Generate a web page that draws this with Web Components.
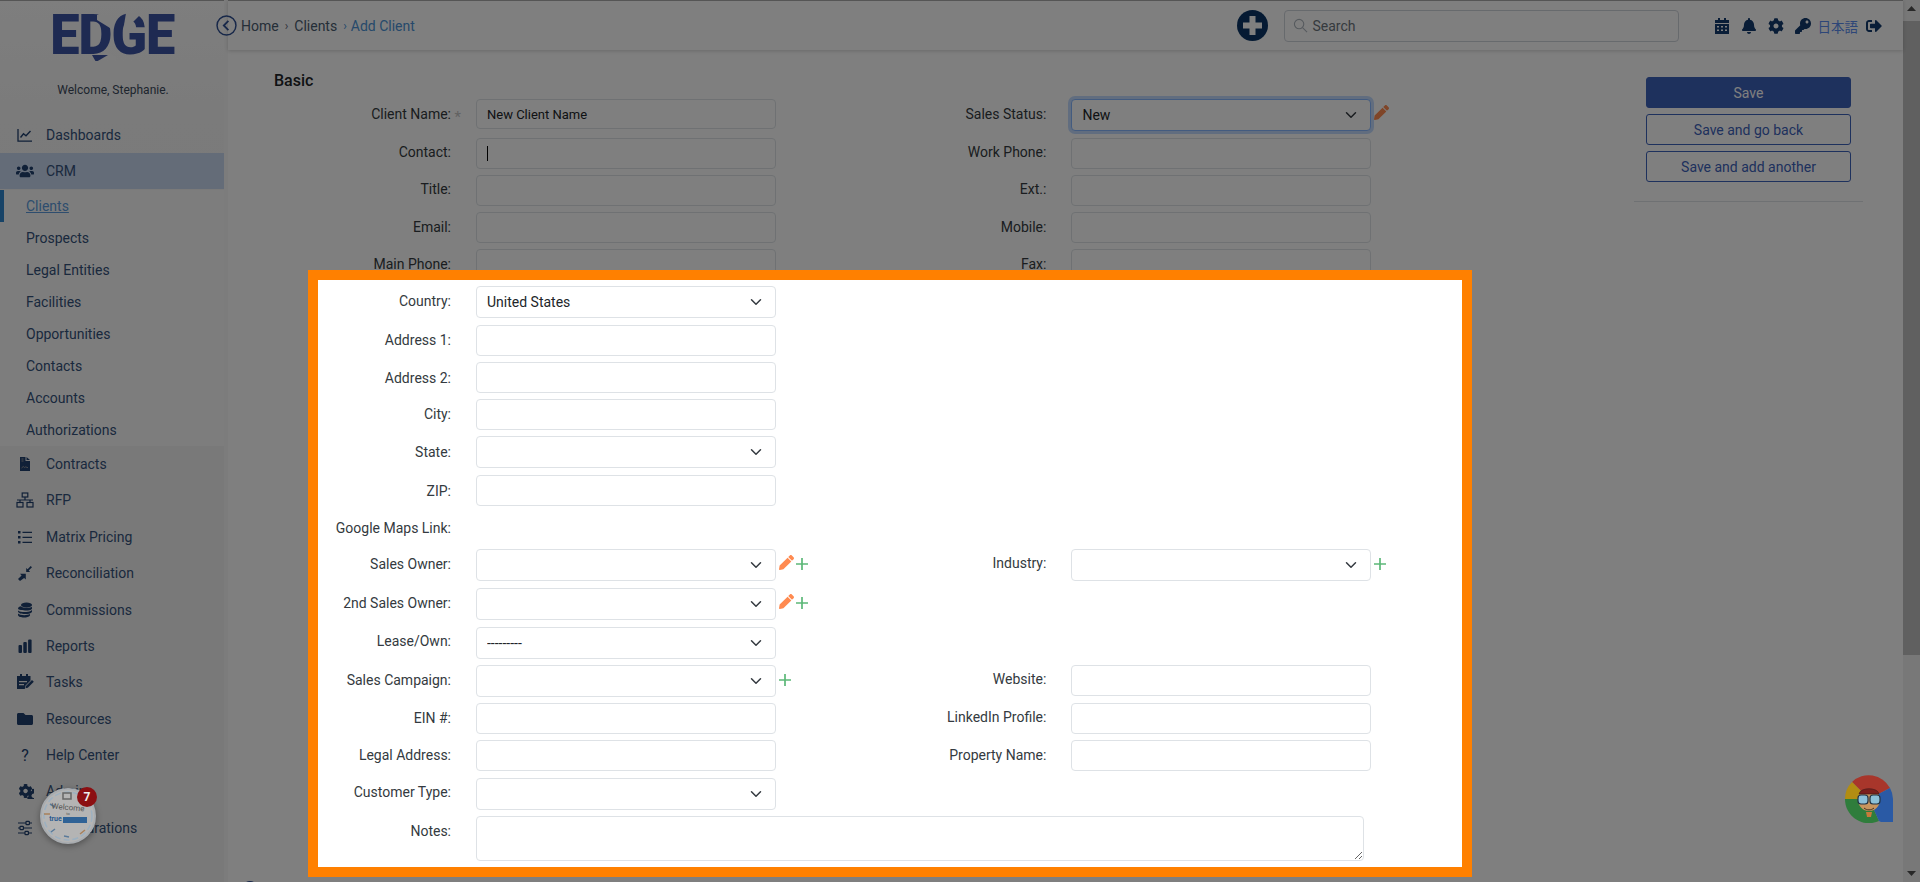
<!DOCTYPE html>
<html lang="en">
<head>
<meta charset="utf-8">
<title>Add Client</title>
<style>
  html, body { margin: 0; height: 882px; overflow: hidden; background: #fff; }
  body { font-family: Roboto, "Liberation Sans", sans-serif; font-size: 14px; color: #343a40; }
</style>
</head>
<body>
<edge-app>
  <edge-sidebar slot="sidebar">
    <nav-item icon="chart">Dashboards</nav-item>
    <nav-item icon="users" active>CRM</nav-item>
    <nav-sub current>Clients</nav-sub>
    <nav-sub>Prospects</nav-sub>
    <nav-sub>Legal Entities</nav-sub>
    <nav-sub>Facilities</nav-sub>
    <nav-sub>Opportunities</nav-sub>
    <nav-sub>Contacts</nav-sub>
    <nav-sub>Accounts</nav-sub>
    <nav-sub>Authorizations</nav-sub>
    <nav-item icon="file">Contracts</nav-item>
    <nav-item icon="sitemap">RFP</nav-item>
    <nav-item icon="list">Matrix Pricing</nav-item>
    <nav-item icon="compress">Reconciliation</nav-item>
    <nav-item icon="coins">Commissions</nav-item>
    <nav-item icon="bars">Reports</nav-item>
    <nav-item icon="tasks">Tasks</nav-item>
    <nav-item icon="folder">Resources</nav-item>
    <nav-item icon="help">Help Center</nav-item>
    <nav-item icon="cogs">Admin</nav-item>
    <nav-item icon="sliders">Configurations</nav-item>
  </edge-sidebar>
  <edge-topbar slot="topbar"></edge-topbar>
  <client-form slot="main">
    <form-field label="Client Name:" required value="New Client Name" h="33" ctl="30" drop="1"></form-field>
    <form-field label="Sales Status:" kind="select" value="New" focused pencil drop="1"></form-field>
    <form-field label="Contact:" caret></form-field>
    <form-field label="Work Phone:"></form-field>
    <form-field label="Title:"></form-field>
    <form-field label="Ext.:"></form-field>
    <form-field label="Email:" drop="1"></form-field>
    <form-field label="Mobile:" drop="1"></form-field>
    <form-field label="Main Phone:" drop="1"></form-field>
    <form-field label="Fax:" drop="1"></form-field>
    <form-field label="Country:" kind="select" value="United States" h="33" drop="1"></form-field>
    <form-field kind="blank"></form-field>
    <form-field label="Address 1:" drop="1"></form-field>
    <form-field kind="blank"></form-field>
    <form-field label="Address 2:" drop="2"></form-field>
    <form-field kind="blank"></form-field>
    <form-field label="City:" drop="1"></form-field>
    <form-field kind="blank"></form-field>
    <form-field label="State:" kind="select" h="33" drop="2"></form-field>
    <form-field kind="blank"></form-field>
    <form-field label="ZIP:" drop="2"></form-field>
    <form-field kind="blank"></form-field>
    <form-field label="Google Maps Link:" kind="none" drop="2"></form-field>
    <form-field kind="blank"></form-field>
    <form-field label="Sales Owner:" kind="select" pencil plus h="32" drop="1"></form-field>
    <form-field label="Industry:" kind="select" plus></form-field>
    <form-field label="2nd Sales Owner:" kind="select" pencil plus h="33" drop="1"></form-field>
    <form-field kind="blank"></form-field>
    <form-field label="Lease/Own:" kind="select" value="---------" h="32"></form-field>
    <form-field kind="blank"></form-field>
    <form-field label="Sales Campaign:" kind="select" plus h="32" drop="1"></form-field>
    <form-field label="Website:"></form-field>
    <form-field label="EIN #:" drop="1"></form-field>
    <form-field label="LinkedIn Profile:"></form-field>
    <form-field label="Legal Address:" h="32" drop="1"></form-field>
    <form-field label="Property Name:" drop="1"></form-field>
    <form-field label="Customer Type:" kind="select" h="32"></form-field>
    <form-field kind="blank"></form-field>
    <form-field label="Notes:" kind="textarea" wide drop="1"></form-field>
  </client-form>
  <save-panel slot="aside"></save-panel>
  <fake-scrollbar slot="scroll"></fake-scrollbar>
</edge-app>
<tour-spot></tour-spot>
<welcome-badge count="7"></welcome-badge>
<chat-avatar></chat-avatar>

<script>
const GEAR = "M487.400 315.700l-42.600-24.600c4.300-23.200 4.300-47 0-70.200l42.600-24.600c4.900-2.800 7.100-8.600 5.500-14-11.100-35.600-30-67.800-54.700-94.600-3.800-4.100-10-5.100-14.800-2.300L380.800 110c-17.900-15.400-38.500-27.300-60.800-35.100V25.800c0-5.600-3.900-10.500-9.400-11.700-36.700-8.200-74.300-7.800-109.200 0-5.500 1.200-9.400 6.100-9.400 11.700V75c-22.200 7.900-42.800 19.800-60.800 35.100L88.700 85.500c-4.900-2.800-11-1.900-14.800 2.300-24.700 26.700-43.600 58.900-54.700 94.600-1.700 5.400.6 11.200 5.500 14L67.300 221c-4.300 23.200-4.300 47 0 70.200l-42.600 24.600c-4.900 2.800-7.100 8.600-5.500 14 11.100 35.600 30 67.800 54.700 94.600 3.800 4.100 10 5.100 14.800 2.300l42.600-24.600c17.900 15.400 38.500 27.300 60.800 35.100v49.200c0 5.600 3.900 10.500 9.400 11.700 36.700 8.200 74.300 7.800 109.200 0 5.500-1.200 9.400-6.100 9.400-11.700v-49.200c22.200-7.900 42.800-19.800 60.800-35.100l42.600 24.600c4.900 2.800 11 1.900 14.800-2.300 24.700-26.700 43.600-58.900 54.700-94.600 1.500-5.500-.7-11.300-5.600-14.100zM256 336c-44.100 0-80-35.900-80-80s35.900-80 80-80 80 35.900 80 80-35.900 80-80 80z";

const ICONS = {
  chart: '<svg viewBox="0 0 16 16" fill="none" stroke="currentColor"><path stroke-width="1.3" d="M1 2v12.2h14"/><path stroke-width="1.4" d="M3.5 10.5l3-3.7 2.5 2 4.500-4.800"/></svg>',
  users: '<svg viewBox="0 0 640 512" fill="currentColor"><path d="M96 224c35.300 0 64-28.700 64-64s-28.700-64-64-64-64 28.700-64 64 28.700 64 64 64zm448 0c35.300 0 64-28.700 64-64s-28.700-64-64-64-64 28.700-64 64 28.700 64 64 64zm32 32h-64c-17.600 0-33.500 7.100-45.100 18.600 40.300 22.100 68.900 62 75.100 109.400h66c17.700 0 32-14.300 32-32v-32c0-35.300-28.700-64-64-64zm-256 0c61.900 0 112-50.100 112-112S381.900 32 320 32 208 82.100 208 144s50.100 112 112 112zm76.800 32h-8.300c-20.800 10-43.900 16-68.500 16s-47.600-6-68.500-16h-8.300C179.600 288 128 339.600 128 403.200V432c0 26.500 21.500 48 48 48h288c26.500 0 48-21.500 48-48v-28.800c0-63.600-51.600-115.200-115.200-115.200zm-223.700-13.400C161.500 263.100 145.600 256 128 256H64c-35.300 0-64 28.700-64 64v32c0 17.700 14.300 32 32 32h65.900c6.300-47.400 34.900-87.300 75.200-109.400z"/></svg>',
  file: '<svg viewBox="0 0 16 16" fill="currentColor"><path d="M3 1h5.500v4H13v10H3zM9.500 1l3.500 3h-3.500z"/><path fill="#9a9a9a" d="M4.500 2.500h2v1h-2zM4.500 4.500h2v1h-2z"/><path fill="none" stroke="#9a9a9a" stroke-width=".9" d="M4.500 12l1.800-1.500 1.200 1 1-.6 2.500.8"/></svg>',
  sitemap: '<svg viewBox="0 0 18 16" fill="none" stroke="currentColor" stroke-width="1.200"><rect x="6.200" y="1" width="5.600" height="4"/><rect x="1" y="10.500" width="6" height="4.500"/><rect x="11" y="10.500" width="6" height="4.500"/><path d="M9 5v3M1 8h16M4 8v2.500M14 8v2.500"/></svg>',
  list: '<svg viewBox="0 0 16 16" fill="currentColor"><rect x="1" y="2" width="2.500" height="2.500"/><rect x="1" y="7" width="2.500" height="2.500"/><rect x="1" y="12" width="2.500" height="2.500"/><path d="M5.500 2.700H15v1.200H5.500zM5.500 7.700H15v1.200H5.500zM5.500 12.700H15v1.200H5.500z"/></svg>',
  compress: '<svg viewBox="0 0 16 16" fill="currentColor"><path d="M1 14l3.600-3.600L3 8.800h5.800v5.800l-1.700-1.700L3 16zM15 2.300l-3.300 3.300 1.400 1.400H9.200V2.900l1.400 1.400L13.700 1z"/></svg>',
  coins: '<svg viewBox="0 0 16 16" fill="currentColor"><ellipse cx="9.500" cy="3" rx="5.500" ry="2.500"/><path d="M1 6.500c0-1.200 1.500-2 3-2.300C5 6 13 6.500 15 4.700v2c-1 1.500-4 1.700-5.500 1.700C6 8.400 1 8 1 6.500zM1 8.500c2 2 10 2 12.500.5L15 8v2c-1.300 1.700-4 2-7 2-3.500 0-7-.8-7-2.500zM1 11.500c2 2 9 2.200 12 .5v1.500c-1 1.500-3.500 2-6 2-3 0-6-.8-6-2.500z"/></svg>',
  bars: '<svg viewBox="0 0 16 16" fill="currentColor"><rect x="1.500" y="7" width="3.500" height="8" rx="1"/><rect x="6.300" y="4" width="3.500" height="11" rx="1"/><rect x="11.100" y="1.500" width="3.500" height="13.500" rx="1"/></svg>',
  tasks: '<svg viewBox="0 0 18 16" fill="currentColor"><path d="M4 0h2v2h4V0h2v2h2.500v4.500L9.500 11.500 8.800 15H1V4.500V2h3zM3 7v1.300h8V7zM3 10v1.300h5V10z"/><path d="M16 6l1.800 1.800-6 6-2.300.5.500-2.300z"/></svg>',
  folder: '<svg viewBox="0 0 512 512" fill="currentColor"><path d="M464 128H272l-64-64H48C21.490 64 0 85.490 0 112v288c0 26.510 21.490 48 48 48h416c26.510 0 48-21.490 48-48V176c0-26.510-21.490-48-48-48z"/></svg>',
  cogs: `<svg viewBox="0 0 640 512" fill="currentColor"><svg x="20" y="0" width="310" height="310" viewBox="0 0 512 512"><path d="${GEAR}"/></svg><svg x="310" y="170" width="320" height="320" viewBox="0 0 512 512"><path d="${GEAR}"/></svg></svg>`,
  sliders: '<svg viewBox="0 0 16 16" fill="none" stroke="currentColor" stroke-width="1.200"><path d="M1 3h8M12.500 3H15M1 8h2M6.500 8H15M1 13h7M11.500 13H15"/><rect x="9" y="1.300" width="3.400" height="3.400" rx=".8"/><rect x="3" y="6.300" width="3.400" height="3.400" rx=".8"/><rect x="8" y="11.300" width="3.400" height="3.400" rx=".8"/></svg>',
  pencil: '<svg viewBox="0 0 512 512" fill="currentColor"><path d="M497.900 142.100l-46.100 46.100c-4.700 4.700-12.300 4.700-17 0l-111-111c-4.700-4.700-4.700-12.300 0-17l46.100-46.100c18.700-18.700 49.100-18.700 67.900 0l60.100 60.100c18.800 18.700 18.800 49.100 0 68zM284.200 99.800L21.600 362.400.4 483.900c-2.900 16.400 11.400 30.600 27.800 27.800l121.500-21.300 262.600-262.600c4.700-4.700 4.700-12.300 0-17l-111-111c-4.800-4.700-12.400-4.700-17.100 0z"/></svg>',
  plus: '<svg viewBox="0 0 12 12" fill="none" stroke="currentColor" stroke-width="1.700"><path d="M6 0v12M0 6h12"/></svg>',
  bell: '<svg viewBox="0 0 448 512" fill="currentColor"><path d="M224 512c35.320 0 63.970-28.650 63.970-64H160.030c0 35.350 28.650 64 63.970 64zm215.390-149.710c-19.320-20.760-55.470-51.990-55.470-154.290 0-77.700-54.480-139.900-127.940-155.160V32c0-17.670-14.320-32-31.980-32s-31.980 14.330-31.980 32v20.840C118.560 68.100 64.080 130.300 64.080 208c0 102.300-36.150 133.530-55.470 154.290-6 6.450-8.660 14.160-8.610 21.710.11 16.400 12.980 32 32.100 32h383.800c19.120 0 32-15.600 32.100-32 .05-7.550-2.610-15.270-8.610-21.710z"/></svg>',
  key: '<svg viewBox="0 0 512 512" fill="currentColor"><path d="M512 176.001C512 273.203 433.202 352 336 352c-11.220 0-22.190-1.062-32.827-3.069l-24.012 27.014A23.999 23.999 0 0 1 261.223 384H224v40c0 13.255-10.745 24-24 24h-40v40c0 13.255-10.745 24-24 24H24c-13.255 0-24-10.745-24-24v-78.059c0-6.365 2.529-12.470 7.029-16.971l161.802-161.802C163.108 213.814 160 195.271 160 176 160 78.798 238.797.001 335.999 0 433.488-.001 512 78.511 512 176.001zM336 128c0 26.510 21.490 48 48 48s48-21.490 48-48-21.490-48-48-48-48 21.490-48 48z"/></svg>',
  gear: `<svg viewBox="0 0 512 512" fill="currentColor"><path d="${GEAR}"/></svg>`,
  calendar: '<svg viewBox="0 0 14 16" fill="currentColor"><path d="M3 0h2v2h4V0h2v2h3v3H0V2h3zM0 6h14v10H0zm2 2v1.500h2V8zm4 0v1.500h2V8zm4 0v1.500h2V8zm-8 3.500V13h2v-1.500zm4 0V13h2v-1.500zm4 0V13h2v-1.500z" fill-rule="evenodd"/></svg>',
  signout: '<svg viewBox="0 0 512 512" fill="currentColor"><path d="M497 273L329 441c-15 15-41 4.500-41-17v-96H152c-13.300 0-24-10.700-24-24v-96c0-13.300 10.700-24 24-24h136V88c0-21.400 25.900-32 41-17l168 168c9.300 9.400 9.300 24.600 0 34zM192 436v-40c0-6.600-5.400-12-12-12H96c-17.700 0-32-14.300-32-32V160c0-17.700 14.300-32 32-32h84c6.600 0 12-5.400 12-12V76c0-6.600-5.400-12-12-12H96c-53 0-96 43-96 96v192c0 53 43 96 96 96h84c6.600 0 12-5.400 12-12z"/></svg>',
  search: '<svg viewBox="0 0 16 16" fill="none" stroke="currentColor" stroke-width="1.200"><circle cx="6.500" cy="6.500" r="5"/><path d="M10.200 10.200L15 15"/></svg>',
  back: '<svg viewBox="0 0 20 20" fill="none" stroke="currentColor"><circle cx="10" cy="10" r="9" stroke-width="1.400"/><path stroke-width="1.700" d="M11.800 5.600L7.400 10l4.400 4.400"/></svg>',
};

customElements.define(
  "edge-icon",
  class extends HTMLElement {
    constructor() {
      super();
      const shadowRoot = this.attachShadow({ mode: "open" });
      shadowRoot.innerHTML = `
<style>
  :host { display: inline-flex; align-items: center; justify-content: center; }
  svg { display: block; width: 100%; height: 100%; }
</style>
${ICONS[this.getAttribute("name")] || ""}`;
    }
  }
);

customElements.define(
  "edge-app",
  class extends HTMLElement {
    constructor() {
      super();
      const shadowRoot = this.attachShadow({ mode: "open" });
      shadowRoot.innerHTML = `
<style>
  :host { display: flex; height: 882px; overflow: hidden; }
  .right { flex: 1; min-width: 0; display: flex; flex-direction: column; }
  .body { flex: 1; min-height: 0; display: flex; }
  .main { flex: 1; min-width: 0; }
</style>
<slot name="sidebar"></slot>
<div class="right">
  <slot name="topbar"></slot>
  <div class="body">
    <div class="main"><slot name="main"></slot></div>
    <slot name="aside"></slot>
  </div>
</div>
<slot name="scroll"></slot>`;
    }
  }
);

customElements.define(
  "edge-sidebar",
  class extends HTMLElement {
    constructor() {
      super();
      const shadowRoot = this.attachShadow({ mode: "open" });
      shadowRoot.innerHTML = `
<style>
  :host { display: block; width: 224px; margin-right: 4px; height: 882px; box-sizing: border-box; border-top: 1px solid #aaa; background: linear-gradient(#fcfcfc 0, #f6f6f6 120px, #f2f2f2 460px); box-shadow: 4px 0 0 #f9f9f9; flex: none; }
  .logo { height: 64px; display: flex; justify-content: center; padding: 8px 0 0 1px; box-sizing: border-box; position: relative; }
  .word { font: 900 55px/52px Roboto, "Liberation Sans", sans-serif; color: #3c54a4; letter-spacing: -1px; transform: scaleX(.95); }
  .cut { position: absolute; left: 54px; top: 8px; width: 122px; height: 52px; }
  .welcome { font-size: 12px; line-height: 16px; text-align: center; color: #3c4a5c; margin: 17px 0 19px; padding-left: 2px; height: 16px; }
</style>
<div class="logo">
  <span class="word">EDGE</span>
  <svg class="cut" viewBox="0 0 122 52"><path fill="#fafafa" d="M43 6l6 0 7 0v13l-13 -8zM62 48l-12 -6-9 6 21 4z"/><path fill="#3c54a4" d="M38 46h16l-12 7z"/><path fill="#fafafa" d="M72 4h16l-9 9-9 3z"/></svg>
</div>
<div class="welcome">Welcome, Stephanie.</div>
<slot></slot>`;
    }
  }
);

customElements.define(
  "nav-item",
  class extends HTMLElement {
    constructor() {
      super();
      const name = this.getAttribute("icon");
      const iconEl = name === "help"
        ? '<span class="q">?</span>'
        : `<edge-icon name="${name}"></edge-icon>`;
      const shadowRoot = this.attachShadow({ mode: "open" });
      shadowRoot.innerHTML = `
<style>
  :host { display: flex; align-items: center; height: 36.4px; color: #35527c; font-size: 14px; }
  :host([active]) { background: #c8d8f0; height: 36px; margin-bottom: .4px; }
  .ic { width: 50px; padding-left: 16px; box-sizing: border-box; display: flex; margin-right: -4px; color: #20406f; }
  edge-icon { width: 18px; height: 16px; }
  .q { width: 18px; text-align: center; font-size: 16px; }
</style>
<span class="ic">${iconEl}</span><slot></slot>`;
    }
  }
);

customElements.define(
  "nav-sub",
  class extends HTMLElement {
    constructor() {
      super();
      const shadowRoot = this.attachShadow({ mode: "open" });
      shadowRoot.innerHTML = `
<style>
  :host { display: flex; align-items: center; height: 32px; padding-left: 26px; background: #fbfbfb; color: #35527c; font-size: 14px; box-sizing: border-box; }
  :host([current]) { padding-left: 22px; border-left: 4px solid #2e86cf; color: #5c9bdc; text-decoration: underline; }
</style>
<slot></slot>`;
    }
  }
);

customElements.define(
  "edge-topbar",
  class extends HTMLElement {
    constructor() {
      super();
      const shadowRoot = this.attachShadow({ mode: "open" });
      shadowRoot.innerHTML = `
<style>
  :host { display: flex; align-items: center; height: 50px; box-sizing: border-box; border-top: 1px solid #aaa; background: #fff; box-shadow: 0 1px 4px rgba(0,0,0,.18); position: relative; color: #4a5c70; font-size: 14px; }
  .back { width: 21px; height: 21px; color: #2e4f92; margin-right: 4px; margin-left: -12px; }
  .sep { margin: 0 6px; font-size: 12px; color: #667; }
  .last { color: #4d93d6; }
  .sep.b { color: #4d93d6; margin-right: 4px; }
  .grow { flex: 1; }
  .add { width: 31px; height: 31px; color: #0a3566; margin-right: 16px; }
  .search { width: 395px; height: 32px; box-sizing: border-box; border: 1px solid #ced4da; border-radius: 4px; display: flex; align-items: center; padding-left: 8px; color: #6c757d; margin-right: 35px; }
  .search edge-icon { width: 15px; height: 15px; margin-right: 5px; color: #adb5bd; }
  .tools { display: flex; align-items: center; color: #123a6e; margin-right: 21px; }
  .tools edge-icon { height: 16px; width: 16px; }
  .lang { color: #5a8cf0; font-family: "Noto Sans CJK JP", sans-serif; font-size: 13.500px; margin: 0 8px 0 7px; }
</style>
<edge-icon class="back" name="back"></edge-icon>
<span>Home</span><span class="sep">›</span><span>Clients</span><span class="sep b">›</span><span class="last">Add Client</span>
<span class="grow"></span>
<svg class="add" viewBox="0 0 31 31"><circle cx="15.500" cy="15.500" r="15.500" fill="currentColor"/><path fill="#fff" d="M12.500 6h6v6.500H25v6h-6.500V25h-6v-6.500H6v-6h6.500z"/></svg>
<div class="search"><edge-icon name="search"></edge-icon>Search</div>
<div class="tools">
  <edge-icon name="calendar" style="margin-right:11px"></edge-icon>
  <edge-icon name="bell" style="margin-right:11px"></edge-icon>
  <edge-icon name="gear" style="margin-right:11px"></edge-icon>
  <edge-icon name="key"></edge-icon>
  <span class="lang">日本語</span>
  <edge-icon name="signout"></edge-icon>
</div>`;
    }
  }
);

customElements.define(
  "client-form",
  class extends HTMLElement {
    constructor() {
      super();
      const shadowRoot = this.attachShadow({ mode: "open" });
      shadowRoot.innerHTML = `
<style>
  :host { display: block; padding: 21px 0 0 46px; }
  h2 { margin: 0 0 9px; font: 500 16px/19px Roboto, "Liberation Sans", sans-serif; color: #212529; }
  .grid { display: grid; grid-template-columns: 595.400px 596px; row-gap: 6px; }
  .more { width: 16px; height: 16px; border-radius: 50%; background: #2e4f92; margin: 19px 0 0 -32px; }
</style>
<h2>Basic</h2>
<div class="grid"><slot></slot></div>
<div class="more"></div>`;
    }
  }
);

customElements.define(
  "form-field",
  class extends HTMLElement {
    constructor() {
      super();
      const kind = this.getAttribute("kind") || "input";
      const label = this.getAttribute("label") || "";
      const value = this.getAttribute("value") || "";
      const h = this.getAttribute("h");
      const ctl = this.getAttribute("ctl");
      const drop = Number(this.getAttribute("drop") || 0);
      let control = "";
      if (kind === "input") {
        control = `<input type="text" value="${value}">`;
      } else if (kind === "select") {
        control = `<span class="sel"><select>${value ? `<option>${value}</option>` : "<option></option>"}</select><svg viewBox="0 0 16 16"><path d="M2 5l6 6 6-6" fill="none" stroke="#343a40" stroke-width="2" stroke-linecap="round" stroke-linejoin="round"/></svg></span>`;
      } else if (kind === "textarea") {
        control = "<textarea></textarea>";
      }
      const caret = this.hasAttribute("caret") ? '<i class="caret"></i>' : "";
      const star = this.hasAttribute("required") ? '<b class="star">*</b>' : "";
      const pencil = this.hasAttribute("pencil") ? '<edge-icon class="pencil" name="pencil"></edge-icon>' : "";
      const plus = this.hasAttribute("plus") ? '<edge-icon class="plus" name="plus"></edge-icon>' : "";
      const shadowRoot = this.attachShadow({ mode: "open" });
      shadowRoot.innerHTML = `
<style>
  :host { display: flex; align-items: flex-start; height: ${h || (kind === "select" ? 33 : 31)}px; }
  :host([wide]) { grid-column: span 2; height: 46px; }
  label { width: 177px; margin-right: 25px; flex: none; text-align: right; font-size: 14px; line-height: 20px; padding-top: ${4 + drop}px; color: #343a40; position: relative; }
  .star { position: absolute; right: -10px; top: 8px; font-weight: 400; font-size: 15px; color: #c4c4c4; }
  .ctl { position: relative; display: block; width: 299.500px; flex: none; }
  :host([wide]) .ctl { width: 888px; }
  input, select, textarea { display: block; width: 100%; box-sizing: border-box; height: ${ctl || 31}px; border: 1px solid #dee2e6; border-radius: 4px; background: #fff; font: 13px Roboto, "Liberation Sans", sans-serif; color: #212529; padding: 0 10px; margin: 0; outline: none; }
  select { appearance: none; height: 32px; font-size: 14px; padding: 0 10px; }
  textarea { height: 45px; padding: 6px 10px; resize: both; }
  .sel svg { position: absolute; right: 14px; top: 10px; width: 12px; height: 12px; }
  :host([focused]) select { border-color: #86b7fe; box-shadow: 0 0 0 3px rgba(13,110,253,.25); }
  .caret { position: absolute; left: 11px; top: 8px; width: 1px; height: 15px; background: #000; }
  .acts { display: flex; margin-left: 3px; padding-top: 6px; gap: 2px; }
  .pencil { width: 15px; height: 15px; color: #ff8a50; }
  .plus { width: 12px; height: 12px; color: #5cb878; margin-top: 3px; }
</style>
${kind === "blank" ? "" : `<label>${label}${star}</label>`}
<span class="ctl">${control}${caret}</span>
<span class="acts">${pencil}${plus}</span>`;
    }
  }
);

customElements.define(
  "save-panel",
  class extends HTMLElement {
    constructor() {
      super();
      const shadowRoot = this.attachShadow({ mode: "open" });
      shadowRoot.innerHTML = `
<style>
  :host { display: block; width: 229px; margin-right: 40px; padding-top: 27px; flex: none; }
  .btns { display: flex; flex-direction: column; gap: 6px; padding: 0 12px 19px; border-bottom: 1px solid #dee2e6; }
  button { height: 31px; box-sizing: border-box; border: 1px solid #3d62ba; border-radius: 3px; background: #fff; color: #3d62ba; font: 14px Roboto, "Liberation Sans", sans-serif; padding: 0; }
  .primary { background: #3d62ba; color: #fff; }
</style>
<div class="btns">
  <button class="primary">Save</button>
  <button>Save and go back</button>
  <button>Save and add another</button>
</div>`;
    }
  }
);

customElements.define(
  "fake-scrollbar",
  class extends HTMLElement {
    constructor() {
      super();
      const shadowRoot = this.attachShadow({ mode: "open" });
      shadowRoot.innerHTML = `
<style>
  :host { display: flex; flex-direction: column; width: 17px; height: 882px; flex: none; background: #f1f1f1; }
  .arrow { height: 17px; display: flex; align-items: center; justify-content: center; }
  .thumb { height: 634px; margin-top: 4px; background: #c1c1c1; }
  .grow { flex: 1; }
</style>
<div class="arrow"><svg width="9" height="5" viewBox="0 0 9 5"><path fill="#505050" d="M4.500 0L9 5H0z"/></svg></div>
<div class="thumb"></div>
<div class="grow"></div>
<div class="arrow"><svg width="9" height="5" viewBox="0 0 9 5"><path fill="#505050" d="M4.500 5L9 0H0z"/></svg></div>`;
    }
  }
);

customElements.define(
  "tour-spot",
  class extends HTMLElement {
    constructor() {
      super();
      const shadowRoot = this.attachShadow({ mode: "open" });
      shadowRoot.innerHTML = `
<style>
  :host { position: absolute; left: 308px; top: 270px; width: 1164px; height: 607px; box-sizing: border-box; border: 10px solid #ff8000; box-shadow: 0 0 0 3000px rgba(0,0,0,.5); z-index: 10; }
</style>`;
    }
  }
);

customElements.define(
  "welcome-badge",
  class extends HTMLElement {
    constructor() {
      super();
      const shadowRoot = this.attachShadow({ mode: "open" });
      shadowRoot.innerHTML = `
<style>
  :host { position: absolute; left: 40px; top: 788px; width: 56px; height: 56px; box-sizing: border-box; border-radius: 50%; background: #b4b4b4; border: 2px solid #a8acb0; box-shadow: 0 2px 6px rgba(0,0,0,.35); z-index: 20; font-family: Roboto, sans-serif; text-align: center; color: #555; }
  .t { font-size: 8px; line-height: 9px; margin-top: 13px; transform: rotate(5deg); }
  .to { font-size: 4px; line-height: 4px; }
  .brand { font-size: 7px; line-height: 7px; font-weight: 700; color: #2a5a90; display: flex; justify-content: center; gap: 1px; }
  .brand i { display: block; width: 24px; height: 6px; background: #2f6296; margin-top: 1px; }
  .n { position: absolute; right: -3px; top: -3px; width: 20px; height: 20px; border-radius: 50%; background: #8c0f12; color: #eee; font: 700 12px/20px Roboto, sans-serif; }
  svg { position: absolute; left: 0; top: 0; width: 52px; height: 52px; }
</style>
<svg viewBox="0 0 52 52" fill="none" stroke-width="1.500"><circle cx="26" cy="26" r="24" stroke="#9cb0c0" stroke-dasharray="6 3"/><path stroke="#5a7a9a" d="M8 14l5 3M9 42l4-3M22 46l5 1"/><path stroke="#a8805a" d="M38 44l5-4M2 24h6"/><path stroke="#666" d="M21 3h8v6h-8z"/></svg>
<div class="t">Welcome</div>
<div class="to">to</div>
<div class="brand">true<i></i></div>
<div class="n">${this.getAttribute("count")}</div>`;
    }
  }
);

customElements.define(
  "chat-avatar",
  class extends HTMLElement {
    constructor() {
      super();
      const shadowRoot = this.attachShadow({ mode: "open" });
      shadowRoot.innerHTML = `
<style>
  :host { position: absolute; left: 1845px; top: 775px; width: 48px; height: 48px; z-index: 20; }
  svg { display: block; width: 48px; height: 48px; }
</style>
<svg viewBox="0 0 48 48">
  <path fill="#a8362b" d="M24 24L7 7a24 24 0 0 1 38 6z"/>
  <path fill="#b28d12" d="M24 24L0 24A24 24 0 0 1 7 7z"/>
  <path fill="#2f7d3c" d="M24 24L34 46A24 24 0 0 1 0 24z"/>
  <path fill="#2a5aa5" d="M24 24L45 13A24 24 0 0 1 48 24V47H36L34 46z"/>
  <circle cx="24" cy="25" r="11" fill="#c8955e"/>
  <path fill="#7c1f1c" stroke="#3a1a1a" stroke-width=".6" d="M14 19c1-7 19-7 20 0z"/>
  <rect x="13" y="20" width="10" height="9" rx="3" fill="#8cc0d8" stroke="#234" stroke-width="1.200"/>
  <rect x="25" y="20" width="10" height="9" rx="3" fill="#8cc0d8" stroke="#234" stroke-width="1.200"/>
  <path d="M19 33c3 2.500 7 2.500 10 0" stroke="#432" stroke-width="1" fill="none"/>
  <path d="M21 37h6l-1 5h-4z" fill="#c77a3a"/>
</svg>`;
    }
  }
);
</script>
</body>
</html>
